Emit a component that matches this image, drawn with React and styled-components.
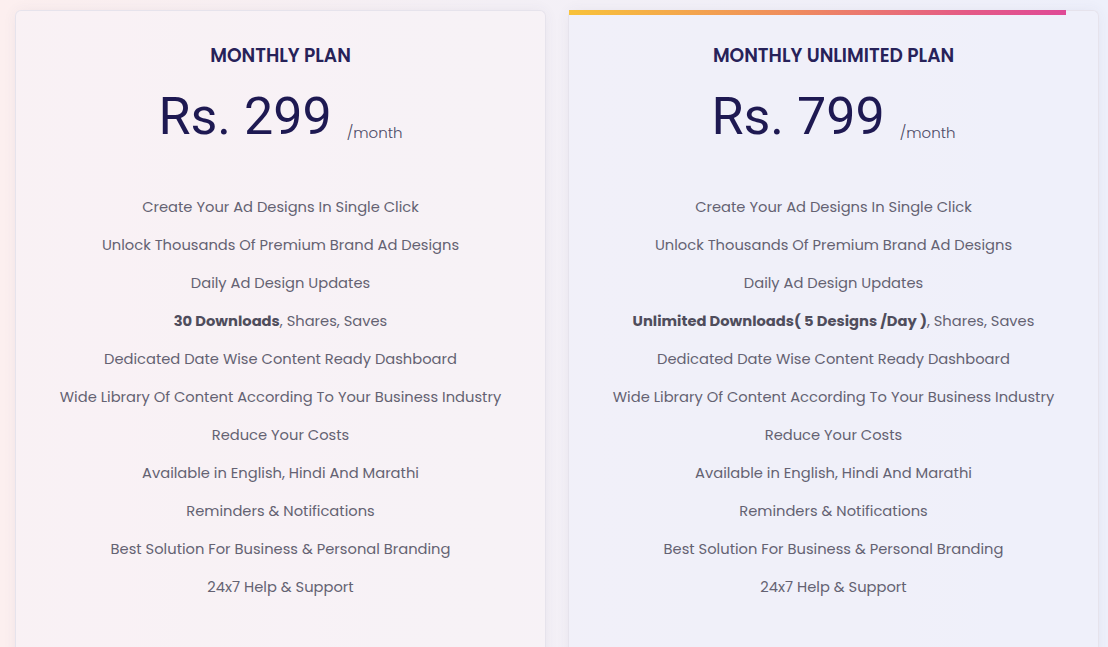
import styled, { createGlobalStyle } from 'styled-components';

const GlobalStyle = createGlobalStyle`
    html, body {
        margin: 0;
        padding: 0;
        height: 100%;
        overflow: hidden;
    }
    body {
        background: linear-gradient(90deg, #fcefef 0%, #f4f0f6 45%, #eef0fb 100%);
        font-family: 'Poppins', 'Open Sans', sans-serif;
    }
`;

const Page = styled.main`
    display: grid;
    grid-template-columns: 1fr 1fr;
    gap: 22px;
    padding: 10px 9px 0 15px;
    height: 647px;
    box-sizing: border-box;
    overflow: hidden;
`;

const Card = styled.article`
    position: relative;
    background: ${(props) => (props.$featured ? 'rgba(240, 240, 250, 0.7)' : 'rgba(248, 242, 246, 0.7)')};
    border: 1px solid #e6e3ec;
    border-bottom: none;
    border-radius: 6px 6px 0 0;
    box-shadow: 0 0 14px rgba(70, 60, 110, 0.06);
    padding-top: 31px;
    display: flex;
    flex-direction: column;
    align-items: center;
    height: 700px;
    box-sizing: border-box;
`;

const TopBar = styled.div`
    position: absolute;
    top: -1px;
    left: 0;
    width: 94%;
    height: 5px;
    background: linear-gradient(90deg, #f8c23a 0%, #ef8c5e 45%, #e45a86 80%, #df4a96 100%);
`;

const PlanName = styled.h2`
    margin: 0;
    font-size: 18.6px;
    line-height: 28px;
    font-weight: 600;
    color: #272259;
`;

const PriceRow = styled.div`
    display: flex;
    align-items: baseline;
    margin-top: 14px;
`;

const Price = styled.span`
    font-family: Roboto, 'Liberation Sans', sans-serif;
    font-size: 52px;
    line-height: 66px;
    font-weight: 400;
    color: #1e1952;
`;

const Per = styled.span`
    font-size: 15px;
    font-weight: 300;
    color: #4d4b66;
    margin-left: 15px;
    transform: translateY(4px);
`;

const Features = styled.ul`
    list-style: none;
    margin: 38px 0 0;
    padding: 0;
    display: flex;
    flex-direction: column;
    align-items: center;
`;

const Feature = styled.li`
    font-size: 14.7px;
    line-height: 38px;
    color: #646272;
    text-align: center;
    b {
        color: #4f4d5c;
        font-weight: 700;
    }
`;

const common = [
    'Create Your Ad Designs In Single Click',
    'Unlock Thousands Of Premium Brand Ad Designs',
    'Daily Ad Design Updates',
];

const rest = [
    'Dedicated Date Wise Content Ready Dashboard',
    'Wide Library Of Content According To Your Business Industry',
    'Reduce Your Costs',
    'Available in English, Hindi And Marathi',
    'Reminders & Notifications',
    'Best Solution For Business & Personal Branding',
    '24x7 Help & Support',
];

const PlanCard = ({ name, price, downloads, featured }) => (
    <Card $featured={featured}>
        {featured && <TopBar />}
        <PlanName>{name}</PlanName>
        <PriceRow>
            <Price>Rs. {price}</Price>
            <Per>/month</Per>
        </PriceRow>
        <Features>
            {common.map((f) => <Feature key={f}>{f}</Feature>)}
            <Feature><b>{downloads}</b>, Shares, Saves</Feature>
            {rest.map((f) => <Feature key={f}>{f}</Feature>)}
        </Features>
    </Card>
);

const App = () => {
    return (
        <>
            <GlobalStyle />
            <Page>
                <PlanCard name="MONTHLY PLAN" price="299" downloads="30 Downloads" />
                <PlanCard name="MONTHLY UNLIMITED PLAN" price="799" downloads="Unlimited Downloads( 5 Designs /Day )" featured />
            </Page>
        </>
    );
}

export default App;
